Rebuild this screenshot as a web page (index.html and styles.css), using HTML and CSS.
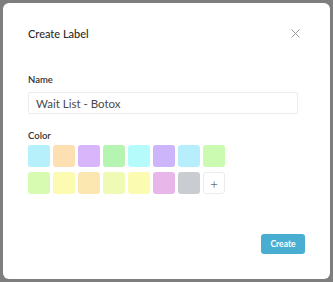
FILE: index.html
```html
<!doctype html>
<html lang="en">
    <head>
        <meta charset="UTF-8" />
        <title>Create Label</title>
        <link rel="stylesheet" href="styles.css">
    </head>
    <body>
        <div class="modal">
            <div class="modal-header">
                <h2>Create Label</h2>
                <button class="close" aria-label="Close">
                    <svg width="9" height="9" viewBox="0 0 9 9">
                        <path d="M0.5 0.5L8.5 8.5M8.5 0.5L0.5 8.5" stroke="#9a9a9a" stroke-width="1" fill="none" />
                    </svg>
                </button>
            </div>
            <label class="field-label" for="label-name">Name</label>
            <input id="label-name" type="text" value="Wait List - Botox" />
            <div class="field-label">Color</div>
            <div class="swatches">
                <span class="swatch" style="background: #b5f0fb"></span>
                <span class="swatch" style="background: #fde0b1"></span>
                <span class="swatch" style="background: #d9b5fb"></span>
                <span class="swatch" style="background: #b5f5b1"></span>
                <span class="swatch" style="background: #b6fbfc"></span>
                <span class="swatch" style="background: #cdb5fb"></span>
                <span class="swatch" style="background: #b6eefc"></span>
                <span class="swatch" style="background: #cafbb1"></span>
                <span class="swatch" style="background: #d6fbb1"></span>
                <span class="swatch" style="background: #fdfbb1"></span>
                <span class="swatch" style="background: #fde7b1"></span>
                <span class="swatch" style="background: #effbb4"></span>
                <span class="swatch" style="background: #fbfbb1"></span>
                <span class="swatch" style="background: #e8b6e8"></span>
                <span class="swatch" style="background: #c9cdd2"></span>
                <span class="swatch add">+</span>
            </div>
            <div class="modal-footer">
                <button class="create">Create</button>
            </div>
        </div>
    </body>
</html>
```

FILE: styles.css
```css
body {
    margin: 0;
    background: #7e7e7e;
    font-family: "Lato", "Open Sans", sans-serif;
    color: #2b2b2b;
}
.modal {
    margin: 3px;
    height: 276px;
    box-sizing: border-box;
    background: #fff;
    border-radius: 6px;
    padding: 0 30px 0 25px;
    display: flex;
    flex-direction: column;
}
.modal-header {
    display: flex;
    justify-content: space-between;
    align-items: center;
    height: 30px;
    margin-top: 15px;
}
.modal-header h2 {
    margin: 0;
    font-size: 11px;
    font-weight: 500;
}
.close {
    background: none;
    border: none;
    padding: 0;
    width: 9px;
    height: 9px;
    display: flex;
    cursor: pointer;
}
.field-label {
    display: block;
    font-size: 9.5px;
    font-weight: 600;
    color: #333;
    margin-top: 26px;
    margin-bottom: 7px;
}
input {
    font-family: inherit;
    font-size: 11.5px;
    font-weight: 400;
    color: #4a4a4a;
    height: 22px;
    box-sizing: border-box;
    border: 1px solid #ececec;
    border-radius: 2px;
    padding: 0 7px;
    width: 270px;
}
input + .field-label {
    margin-top: 16px;
    margin-bottom: 4px;
}
.swatches {
    display: grid;
    grid-template-columns: repeat(8, 22px);
    gap: 5px 3px;
}
.swatch {
    width: 22px;
    height: 22px;
    border-radius: 3px;
}
.swatch.add {
    box-sizing: border-box;
    border: 1px solid #ececec;
    display: flex;
    align-items: center;
    justify-content: center;
    font-size: 14px;
    font-weight: 300;
    color: #333;
}
.modal-footer {
    display: flex;
    justify-content: flex-end;
    margin-top: 40px;
    margin-right: -5px;
}
.create {
    font-family: inherit;
    font-size: 8.5px;
    font-weight: 700;
    color: #fff;
    background: #4aaed3;
    border: none;
    border-radius: 3px;
    width: 44px;
    height: 20px;
    padding: 0;
    cursor: pointer;
}
```
